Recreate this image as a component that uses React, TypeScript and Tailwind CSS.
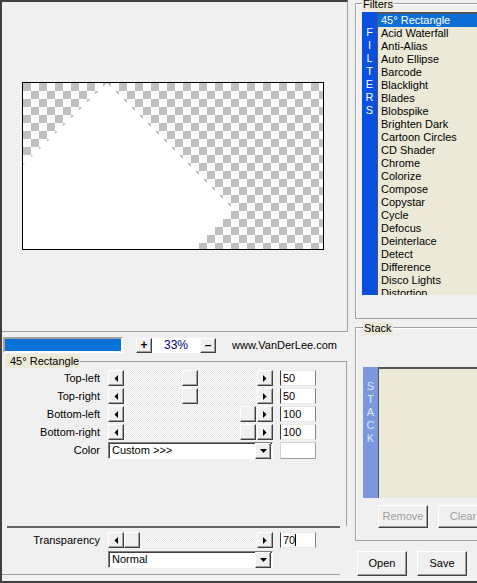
import React from 'react'

const filters = [
  '45° Rectangle', 'Acid Waterfall', 'Anti-Alias', 'Auto Ellipse', 'Barcode', 'Blacklight', 'Blades',
  'Blobspike', 'Brighten Dark', 'Cartoon Circles', 'CD Shader', 'Chrome', 'Colorize', 'Compose',
  'Copystar', 'Cycle', 'Defocus', 'Deinterlace', 'Detect', 'Difference', 'Disco Lights', 'Distortion',
]

// classic win32 bevels
const raised =
  'bg-[#f0f0f0] border border-t-white border-l-white border-r-[#404040] border-b-[#404040] shadow-[inset_-1px_-1px_0_#a0a0a0]'
const sunken =
  'bg-white border border-t-[#808080] border-l-[#808080] border-r-white border-b-white shadow-[inset_1px_1px_0_#404040]'
const etched = 'border-[#a0a0a0] shadow-[inset_1px_1px_0_#fff]'
const track =
  'bg-[conic-gradient(#fff_25%,#e4e4e4_0_50%,#fff_0_75%,#e4e4e4_0)] bg-[length:2px_2px]'

function Arrow({ dir }: { dir: 'left' | 'right' | 'down' }) {
  if (dir === 'down')
    return (
      <svg width="7" height="4" viewBox="0 0 7 4">
        <path d="M0 0H7L3.5 4Z" fill="#000" />
      </svg>
    )
  return (
    <svg width="4" height="7" viewBox="0 0 4 7">
      <path d={dir === 'left' ? 'M4 0V7L0.5 3.5Z' : 'M0 0V7L3.5 3.5Z'} fill="#000" />
    </svg>
  )
}

function ArrowBtn({ dir }: { dir: 'left' | 'right' | 'down' }) {
  return (
    <div className={`${raised} w-[16px] h-[16px] shrink-0 flex items-center justify-center`}>
      <Arrow dir={dir} />
    </div>
  )
}

function Slider({ thumb }: { thumb: string }) {
  return (
    <div className="flex h-[16px] w-[165px]">
      <ArrowBtn dir="left" />
      <div className={`flex-1 ${track}`}>
        <div className={`${raised} w-[16px] h-[16px] ${thumb}`} />
      </div>
      <ArrowBtn dir="right" />
    </div>
  )
}

function ValueBox({ v, caret }: { v: string; caret?: boolean }) {
  return (
    <div className="ml-[7px] w-[36px] h-[16px] bg-white border border-l-[#404040] border-r-[#808080] border-t-[#e8e8e8] border-b-[#e8e8e8] pl-[2px] leading-[14px] flex items-center">
      {v}
      {caret && <span className="w-px h-[12px] bg-black" />}
    </div>
  )
}

function Select({ text }: { text: string }) {
  return (
    <div className={`${sunken} w-[165px] h-[17px] flex items-center justify-between pl-[3px] pr-px`}>
      <span>{text}</span>
      <ArrowBtn dir="down" />
    </div>
  )
}

function SliderRow({ label, thumb, v }: { label: string; thumb: string; v: string }) {
  return (
    <div className="flex items-center h-[16px]">
      <div className="w-[95px] text-right">{label}</div>
      <div className="ml-[8px]">
        <Slider thumb={thumb} />
      </div>
      <ValueBox v={v} />
    </div>
  )
}

function Preview() {
  return (
    <svg width="300" height="166" viewBox="0 0 300 166" className="block">
      <defs>
        <pattern id="chk" width="16" height="16" patternUnits="userSpaceOnUse">
          <rect width="16" height="16" fill="#fff" />
          <rect width="8" height="8" fill="#c0c0c0" />
          <rect x="8" y="8" width="8" height="8" fill="#c0c0c0" />
        </pattern>
      </defs>
      <rect width="300" height="166" fill="url(#chk)" />
      <polygon points="84,0 210,126 170,166 0,166 0,82" fill="#fff" />
    </svg>
  )
}

export default function App() {
  return (
    <div className="w-[477px] h-[583px] overflow-hidden bg-[#f0f0f0] border-l-2 border-b-2 border-[#404040] flex font-['Liberation_Sans',Arial,sans-serif] text-[11px] leading-[13px] text-black">
      {/* left column */}
      <div className="w-[346px] shrink-0 flex flex-col">
        <div className="h-[332px] border-t-2 border-t-[#404040] border-r border-b border-r-[#a0a0a0] border-b-[#a0a0a0] pt-[80px] pl-[20px]">
          <div className="w-[302px] h-[168px] border border-black">
            <Preview />
          </div>
        </div>

        {/* zoom bar */}
        <div className="h-[22px] flex items-start pt-[5px]">
          <div className="ml-px w-[120px] h-[16px] border-2 border-t-[#a0a0a0] border-l-[#a0a0a0] border-r-white border-b-white bg-[#0a72d6]" />
          <div className={`${raised} ml-[13px] mt-px w-[16px] h-[15px] flex items-center justify-center font-bold text-[12px]`}>+</div>
          <div className="mt-px w-[48px] h-[15px] bg-white flex items-center justify-center text-[#000080] text-[12px]">33%</div>
          <div className={`${raised} mt-px w-[16px] h-[15px] flex items-center justify-center font-bold text-[12px]`}>–</div>
          <div className="ml-[16px] mt-[2px] leading-[13px]">www.VanDerLee.com</div>
        </div>

        {/* 45° Rectangle group */}
        <div className="mt-[7px] ml-[3px] mr-px h-[165px] border-t border-r border-[#a0a0a0]">
          <div className="-mt-[8px] w-fit bg-[#ece9d8] pl-[5px] pr-px leading-[14px]">45° Rectangle</div>
          <div className="mt-[2px] flex flex-col gap-[2px]">
            <SliderRow label="Top-left" thumb="ml-[58px]" v="50" />
            <SliderRow label="Top-right" thumb="ml-[58px]" v="50" />
            <SliderRow label="Bottom-left" thumb="ml-[116px]" v="100" />
            <SliderRow label="Bottom-right" thumb="ml-[116px]" v="100" />
            <div className="flex items-center h-[17px]">
              <div className="w-[95px] text-right">Color</div>
              <div className="ml-[8px]">
                <Select text="Custom >>>" />
              </div>
              <div className="ml-[7px] w-[36px] h-[17px] bg-white border border-[#d0d0d0] border-r-[#a0a0a0] border-b-[#a0a0a0]" />
            </div>
          </div>
        </div>
        <div className="ml-[5px] w-[333px] h-[2px] bg-[#646464]" />

        <div className="mt-[4px] flex items-center h-[16px]">
          <div className="w-[98px] text-right">Transparency</div>
          <div className="ml-[8px]">
            <Slider thumb="ml-0" />
          </div>
          <ValueBox v="70" caret />
        </div>
        <div className="mt-[3px] ml-[106px]">
          <Select text="Normal" />
        </div>
        <div className="mt-[6px] w-[338px] h-px bg-[#a0a0a0]" />
      </div>

      {/* right column */}
      <div className="flex-1 flex flex-col">
        <div className={`ml-[7px] mt-[3px] h-[316px] w-[140px] shrink-0 border-t border-l border-b ${etched}`}>
          <div className="-mt-[6px] ml-[6px] w-fit px-px bg-[#ece9d8]">Filters</div>
          <div className="flex mt-px ml-[6px] h-[283px]">
            <div className="w-[15px] bg-[#0a50e0] text-white flex flex-col items-center pt-[14px]">
              {'FILTERS'.split('').map((c, i) => (
                <span key={i} className="leading-[13px]">{c}</span>
              ))}
            </div>
            <div className="w-[110px] bg-[#ece9d8] border-l border-t-2 border-[#555] overflow-hidden">
              {filters.map((f, i) => (
                <div
                  key={f}
                  className={`h-[13px] leading-[13px] pl-[3px] whitespace-nowrap ${i === 0 ? 'bg-[#0a6ed6] text-white' : ''}`}
                >
                  {f}
                </div>
              ))}
            </div>
          </div>
        </div>

        <div className={`ml-[7px] mt-[8px] h-[214px] w-[140px] shrink-0 border-t border-l border-b ${etched}`}>
          <div className="-mt-[6px] ml-[7px] w-fit px-px bg-[#ece9d8]">Stack</div>
          <div className="flex mt-[32px] ml-[7px] h-[131px]">
            <div className="w-[15px] bg-[#7b97dd] text-[#dfe7fb] flex flex-col items-center pt-[13px]">
              {'STACK'.split('').map((c, i) => (
                <span key={i} className="leading-[13px]">{c}</span>
              ))}
            </div>
            <div className="w-[110px] bg-[#ece9d8] border-l border-t-2 border-[#555]" />
          </div>
          <div className="flex mt-[7px] ml-[22px] gap-[10px]">
            <div className={`${raised} w-[50px] h-[23px] shrink-0 flex items-center justify-center text-[#a0a0a0]`}>Remove</div>
            <div className={`${raised} w-[50px] h-[23px] shrink-0 flex items-center justify-center text-[#a0a0a0]`}>Clear</div>
          </div>
        </div>

        <div className="flex mt-[10px] ml-[9px] gap-[10px]">
          <div className={`${raised} w-[50px] h-[25px] shrink-0 flex items-center justify-center`}>Open</div>
          <div className={`${raised} w-[50px] h-[25px] shrink-0 flex items-center justify-center`}>Save</div>
        </div>
      </div>
    </div>
  )
}
